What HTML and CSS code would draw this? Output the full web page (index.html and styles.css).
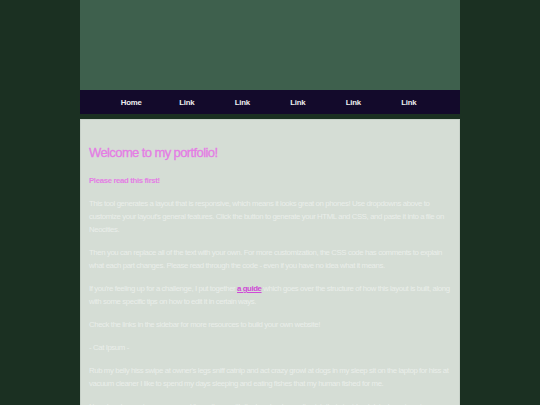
FILE: index.html
```html
<!DOCTYPE html>
<html>
<head>
<meta charset="utf-8">
<link rel="stylesheet" href="styles.css">
</head>
<body>
<div class="container">
  <header class="header"></header>
  <nav class="nav">
    <a href="#">Home</a>
    <a href="#">Link</a>
    <a href="#">Link</a>
    <a href="#">Link</a>
    <a href="#">Link</a>
    <a href="#">Link</a>
  </nav>
  <main class="main">
    <h1>Welcome to my portfolio!</h1>
    <p class="strong">Please read this first!</p>
    <p>This tool generates a layout that is responsive, which means it looks great on phones! Use dropdowns above to customize your layout's general features. Click the button to generate your HTML and CSS, and paste it into a file on Neocities.</p>
    <p>Then you can replace all of the text with your own. For more customization, the CSS code has comments to explain what each part changes. Please read through the code - even if you have no idea what it means.</p>
    <p>If you're feeling up for a challenge, I put together <a href="#">a guide</a> which goes over the structure of how this layout is built, along with some specific tips on how to edit it in certain ways.</p>
    <p>Check the links in the sidebar for more resources to build your own website!</p>
    <p>- Cat Ipsum -</p>
    <p>Rub my belly hiss swipe at owner's legs sniff catnip and act crazy growl at dogs in my sleep sit on the laptop for hiss at vacuum cleaner I like to spend my days sleeping and eating fishes that my human fished for me.</p>
    <p>I head nudges eat my own ears, I lie on these with the hands who can't catch that stupid red dot, chase imaginary bugs.</p>
  </main>
</div>
</body>
</html>
```
FILE: styles.css
```css
html, body {
  margin: 0;
  padding: 0;
}
body {
  background: #1b3022;
  font-family: "Liberation Sans", Arial, sans-serif;
  height: 405px;
  overflow: hidden;
}
.container {
  width: 380px;
  margin: 0 auto;
}
.header {
  height: 90px;
  background: #3e604d;
}
.nav {
  height: 24px;
  background: #130a2b;
  display: flex;
  justify-content: center;
  align-items: center;
}
.nav a {
  width: 55.5px;
  text-align: center;
  color: #eeeeee;
  text-decoration: none;
  font-size: 7.8px;
  font-weight: bold;
  letter-spacing: -0.2px;
}
.main {
  margin-top: 5px;
  background: #d5ddd5;
  border: 1px solid #c8d1c9;
  padding: 16px 8px 20px;
  color: #eaeeea;
  font-size: 7.8px;
  letter-spacing: -0.4px;
  line-height: 13px;
}
.main h1 {
  color: #e47de4;
  font-size: 13px;
  font-weight: normal;
  letter-spacing: -0.6px;
  -webkit-text-stroke: 0.35px #e47de4;
  margin: 8px 0 12px;
  line-height: 18px;
}
.main p {
  margin: 0 0 10px;
}
.main .strong {
  color: #e47de4;
  font-weight: bold;
  letter-spacing: -0.35px;
}
.main a {
  color: #cf4ad6;
  font-weight: bold;
}
```
